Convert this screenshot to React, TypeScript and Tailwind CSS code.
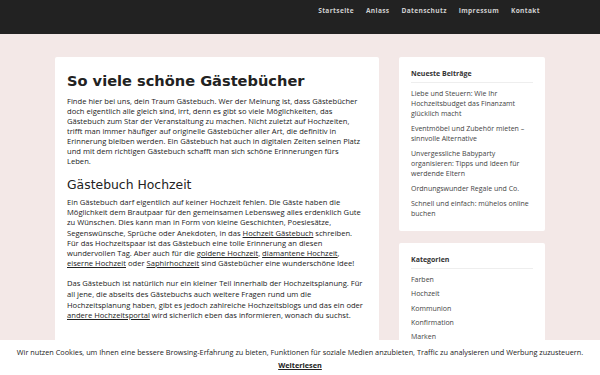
import React from 'react';

const navItems = ['Startseite', 'Anlass', 'Datenschutz', 'Impressum', 'Kontakt'];

const recentPosts = [
  'Liebe und Steuern: Wie Ihr Hochzeitsbudget das Finanzamt glücklich macht',
  'Eventmöbel und Zubehör mieten – sinnvolle Alternative',
  'Unvergessliche Babyparty organisieren: Tipps und Ideen für werdende Eltern',
  'Ordnungswunder Regale und Co.',
  'Schnell und einfach: mühelos online buchen',
];

const categories = ['Farben', 'Hochzeit', 'Kommunion', 'Konfirmation', 'Marken', 'Taufe', 'Zubehör'];

const heading = { fontFamily: '"DejaVu Sans", sans-serif' };

function Link({ children }: { children: React.ReactNode }) {
  return <a href="#" className="underline underline-offset-1 text-[#222]">{children}</a>;
}

export default function App() {
  return (
    <div className="min-h-screen bg-[#f3e8e7] text-[#222]" style={{ fontFamily: '"Open Sans", "Noto Sans", sans-serif' }}>
      <header className="h-[34px] bg-[#222222]">
        <nav className="mx-auto flex h-full max-w-[490px] items-start justify-end gap-[12px] pt-[7px] pr-[5px]">
          {navItems.map((item) => (
            <a key={item} href="#" className="text-[6.6px] font-bold leading-[8px] tracking-[0.35px] text-[#cfcfcf]">
              {item}
            </a>
          ))}
        </nav>
      </header>

      <div className="mx-auto flex max-w-[490px] items-start gap-[20px] pt-[23px] pb-10">
        <main className="w-[324px] shrink-0 rounded-[2px] bg-white pl-[12px] pr-[14px] pt-[12px] pb-[40px]">
          <h1 style={heading} className="text-[14.6px] font-bold leading-[24px] text-[#222]">
            So viele schöne Gästebücher
          </h1>
          <p className="mt-[3px] text-[7.6px] leading-[10px]">
            Finde hier bei uns, dein Traum Gästebuch. Wer der Meinung ist, dass Gästebücher doch eigentlich alle gleich
            sind, irrt, denn es gibt so viele Möglichkeiten, das Gästebuch zum Star der Veranstaltung zu machen. Nicht
            zuletzt auf Hochzeiten, trifft man immer häufiger auf originelle Gästebücher aller Art, die definitiv in
            Erinnerung bleiben werden. Ein Gästebuch hat auch in digitalen Zeiten seinen Platz und mit dem richtigen
            Gästebuch schafft man sich schöne Erinnerungen fürs
            <br />
            Leben.
          </p>
          <h2 style={heading} className="mt-[10px] text-[12.4px] leading-[18px] text-[#222]">
            Gästebuch Hochzeit
          </h2>
          <p className="mt-[3px] text-[7.6px] leading-[10.2px]">
            Ein Gästebuch darf eigentlich auf keiner Hochzeit fehlen. Die Gäste haben die Möglichkeit dem Brautpaar für
            den gemeinsamen Lebensweg alles erdenklich Gute zu Wünschen. Dies kann man in Form von kleine Geschichten,
            Poesiesätze, Segenswünsche, Sprüche oder Anekdoten, in das <Link>Hochzeit Gästebuch</Link> schreiben.
            <br />
            Für das Hochzeitspaar ist das Gästebuch eine tolle Erinnerung an diesen wundervollen Tag. Aber auch für die{' '}
            <Link>goldene Hochzeit</Link>, <Link>diamantene Hochzeit</Link>, <Link>eiserne Hochzeit</Link> oder{' '}
            <Link>Saphirhochzeit</Link> sind Gästebücher eine wunderschöne Idee!
          </p>
          <p className="mt-[10px] text-[7.6px] leading-[10.6px]">
            Das Gästebuch ist natürlich nur ein kleiner Teil innerhalb der Hochzeitsplanung. Für all jene, die abseits
            des Gästebuchs auch weitere Fragen rund um die Hochzeitsplanung haben, gibt es jedoch zahlreiche
            Hochzeitsblogs und das ein oder <Link>andere Hochzeitsportal</Link> wird sicherlich eben das informieren,
            wonach du suchst.
          </p>
        </main>

        <aside className="flex w-[146px] shrink-0 flex-col gap-[12px]">
          <section className="rounded-[2px] bg-white px-[12px] pt-[12px] pb-[12px]">
            <h3 className="text-[7px] font-bold leading-[9px] text-[#333]">Neueste Beiträge</h3>
            <div className="mt-[4px] mb-[6px] h-px bg-[#eeeeee]" />
            <ul className="flex flex-col gap-[5px]">
              {recentPosts.map((post) => (
                <li key={post} className="text-[7px] leading-[10px] text-[#444]">
                  {post}
                </li>
              ))}
            </ul>
          </section>

          <section className="rounded-[2px] bg-white px-[12px] pt-[12px] pb-[14px]">
            <h3 className="text-[7px] font-bold leading-[9px] text-[#333]">Kategorien</h3>
            <div className="mt-[4px] mb-[6px] h-px bg-[#eeeeee]" />
            <ul className="flex flex-col gap-[4.3px]">
              {categories.map((cat) => (
                <li key={cat} className="text-[7px] leading-[10px] text-[#444]">
                  {cat}
                </li>
              ))}
            </ul>
          </section>
        </aside>
      </div>

      <div className="fixed inset-x-0 bottom-0 flex h-[35px] flex-col items-center bg-white pt-[7px]">
        <p className="text-[7.3px] leading-[10px] text-[#222]">
          Wir nutzen Cookies, um Ihnen eine bessere Browsing-Erfahrung zu bieten, Funktionen für soziale Medien
          anzubieten, Traffic zu analysieren und Werbung zuzusteuern.
        </p>
        <a href="#" className="mt-[3px] text-[7.3px] font-bold leading-[10px] text-[#222] underline underline-offset-1">
          Weiterlesen
        </a>
      </div>
    </div>
  );
}
